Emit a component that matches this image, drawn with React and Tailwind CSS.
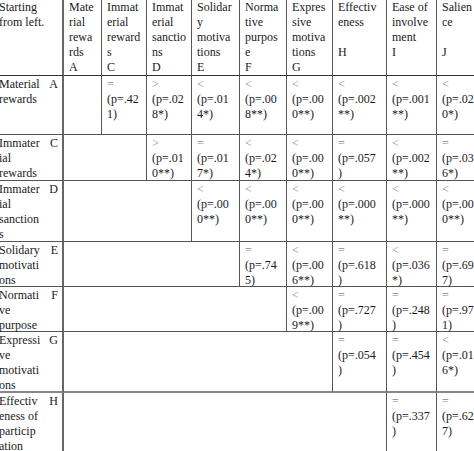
import React from 'react';

// column letters in the order they appear across the top
const headers = [
  { lines: ['Mate', 'rial', 'rewa', 'rds', 'A'] },
  { lines: ['Immat', 'erial', 'reward', 's', 'C'] },
  { lines: ['Immat', 'erial', 'sanctio', 'ns', 'D'] },
  { lines: ['Solidar', 'y', 'motiva', 'tions', 'E'] },
  { lines: ['Norma', 'tive', 'purpos', 'e', 'F'] },
  { lines: ['Expres', 'sive', 'motiva', 'tions', 'G'] },
  { lines: ['Effectiv', 'eness', '\u00a0', 'H'] },
  { lines: ['Ease of', 'involve', 'ment', 'I'] },
  { lines: ['Salien', 'ce', '\u00a0', 'J'] },
];

// each row: label lines, letter, how many columns are blank, then comparison cells
const rows = [
  {
    label: ['Material', 'rewards'], letter: 'A', blank: 1, ownCell: true,
    cells: [['=', '(p=.42', '1)'], ['>', '(p=.02', '8*)'], ['<', '(p=.01', '4*)'], ['<', '(p=.00', '8**)'], ['<', '(p=.00', '0**)'], ['<', '(p=.002', '**)'], ['<', '(p=.001', '**)'], ['<', '(p=.02', '0*)']],
  },
  {
    label: ['Immater', 'ial', 'rewards'], letter: 'C', blank: 2,
    cells: [['>', '(p=.01', '0**)'], ['=', '(p=.01', '7*)'], ['<', '(p=.02', '4*)'], ['<', '(p=.00', '0**)'], ['=', '(p=.057', ')'], ['<', '(p=.002', '**)'], ['=', '(p=.03', '6*)']],
  },
  {
    label: ['Immater', 'ial', 'sanction', 's'], letter: 'D', blank: 3,
    cells: [['<', '(p=.00', '0**)'], ['<', '(p=.00', '0**)'], ['<', '(p=.00', '0**)'], ['<', '(p=.000', '**)'], ['<', '(p=.000', '**)'], ['<', '(p=.00', '0**)']],
  },
  {
    label: ['Solidary', 'motivati', 'ons'], letter: 'E', blank: 4,
    cells: [['=', '(p=.74', '5)'], ['<', '(p=.00', '6**)'], ['=', '(p=.618', ')'], ['<', '(p=.036', '*)'], ['=', '(p=.69', '7)']],
  },
  {
    label: ['Normati', 've', 'purpose'], letter: 'F', blank: 5,
    cells: [['<', '(p=.00', '9**)'], ['=', '(p=.727', ')'], ['=', '(p=.248', ')'], ['=', '(p=.97', '1)']],
  },
  {
    label: ['Expressi', 've', 'motivati', 'ons'], letter: 'G', blank: 6, thickBottom: true,
    cells: [['=', '(p=.054', ')'], ['=', '(p=.454', ')'], ['<', '(p=.01', '6*)']],
  },
  {
    label: ['Effectiv', 'eness of', 'particip', 'ation'], letter: 'H', blank: 7,
    cells: [['=', '(p=.337', ')'], ['=', '(p=.62', '7)']],
  },
];

const spans = {
  2: 'col-span-2',
  3: 'col-span-3',
  4: 'col-span-4',
  5: 'col-span-5',
  6: 'col-span-6',
  7: 'col-span-7',
};

const Lines = ({ lines }) => lines.map((l, i) => <div key={i}>{l}</div>);

const ValueCell = ({ value, thick }) => (
  <div className={`pl-[5px] pt-px border-r border-[#555] ${thick ? 'border-b-2 border-b-[#888]' : 'border-b'}`}>
    <div className="text-[#888]">{value[0]}</div>
    <div>{value[1]}</div>
    <div>{value[2]}</div>
  </div>
);

export default function App() {
  return (
    <div className="w-[474px] h-[451px] overflow-hidden bg-white text-[#1a1a1a] font-['Liberation_Serif',serif] text-[12px] leading-[15px]">
      <div className="grid grid-cols-[64px_38px_45px_45px_48px_47px_46px_54px_50px_60px] grid-rows-[76px_59px_46px_61px_45px_45px_61px_80px]">
        {/* header row */}
        <div className="-ml-px border-r-2 border-r-[#666] border-b border-b-[#333]">
          <div>Starting</div>
          <div>from left.</div>
        </div>
        {headers.map((h, i) => (
          <div key={i} className="pl-[5px] border-r border-[#555] border-b border-b-[#333]">
            <Lines lines={h.lines} />
          </div>
        ))}

        {rows.map((r) => (
          <React.Fragment key={r.letter}>
            <div className={`flex justify-between pr-[4px] -ml-px pt-px border-r-2 border-r-[#666] ${r.thickBottom ? 'border-b-2 border-b-[#888]' : 'border-b border-b-[#555]'}`}>
              <div><Lines lines={r.label} /></div>
              <div>{r.letter}</div>
            </div>
            {r.ownCell ? (
              <div className="border-r border-b border-[#555]" />
            ) : (
              <div className={`${spans[r.blank]} border-r border-[#555] ${r.thickBottom ? 'border-b-2 border-b-[#888]' : 'border-b'}`} />
            )}
            {r.cells.map((c, i) => (
              <ValueCell key={i} value={c} thick={r.thickBottom} />
            ))}
          </React.Fragment>
        ))}
      </div>
    </div>
  );
}
